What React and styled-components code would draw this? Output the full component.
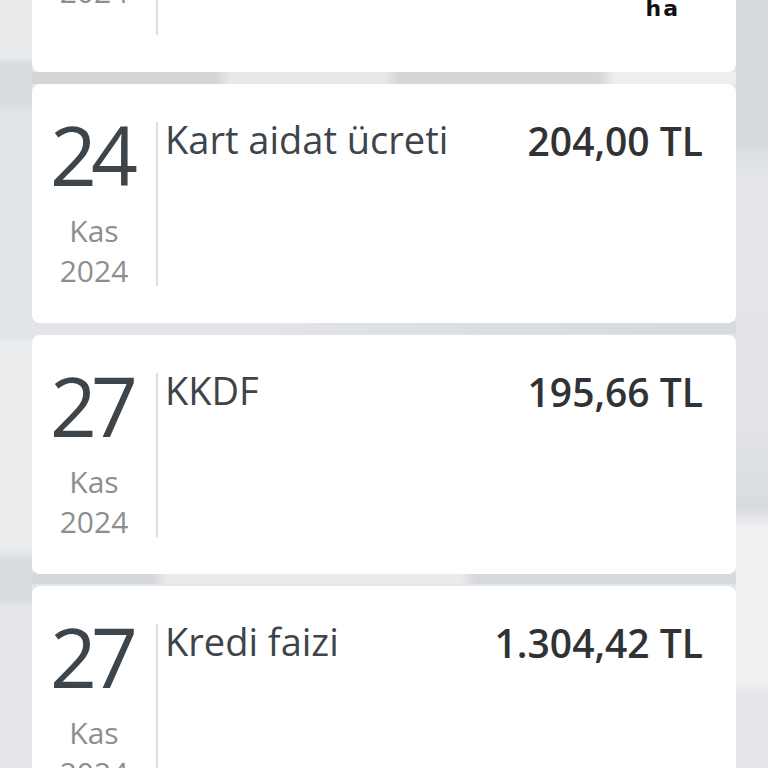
import React from "react";
import styled, { createGlobalStyle } from "styled-components";

const Global = createGlobalStyle`
  html, body { margin: 0; padding: 0; }
  body {
    width: 768px;
    height: 768px;
    overflow: hidden;
    font-family: "Open Sans", "Noto Sans", sans-serif;
  }
`;

const Screen = styled.div`
  width: 768px;
  height: 768px;
  overflow: hidden;
  box-sizing: border-box;
  padding: 0 32px;
  background:
    linear-gradient(180deg, #e9ebed 0 58px, #d8dbdf 64px 104px, #e1e4e7 112px 336px, #eaecee 344px 548px, #d8dbdf 562px 598px, #e3e5e8 606px) left 0 top 0 / 32px 100% no-repeat,
    linear-gradient(180deg, #d7dadd 0 140px, #e4e6e9 175px, #e2e4e7 420px, #d8dbdf 508px, #f0f1f3 528px 680px, #e5e7ea 692px) right 0 top 0 / 32px 100% no-repeat,
    linear-gradient(90deg, #d3d6d9 0 28%, #e6e8ea 30% 50%, #d4d7da 52% 78%, #eceef0 80%) left 0 top 72px / 100% 12px no-repeat,
    linear-gradient(90deg, #e3e5e8 0 30%, #dcdfe2 60%, #d6d9dc 100%) left 0 top 322px / 100% 12px no-repeat,
    linear-gradient(90deg, #d6d9dc 0 20%, #e9ebed 22% 60%, #d7dadd 62%) left 0 top 572px / 100% 12px no-repeat,
    #e2e4e7;
`;

const List = styled.div`
  display: flex;
  flex-direction: column;
  gap: 12px;
  margin-top: ${(p) => p.$offset}px;
`;

const Card = styled.div`
  position: relative;
  display: flex;
  background: #ffffff;
  border-radius: 8px;
  padding: 38px 33px 33px 0;
`;

const DateCol = styled.div`
  width: 124px;
  flex: none;
  display: flex;
  flex-direction: column;
  align-items: center;
  padding-bottom: ${(p) => p.$extra || 0}px;
`;

const Day = styled.div`
  font-size: 82px;
  line-height: 84px;
  font-weight: 400;
  letter-spacing: -6px;
  margin-top: -10px;
  margin-right: 6px;
  color: #3d444a;
`;

const Month = styled.div`
  font-size: 30px;
  line-height: ${(p) => (p.$first ? 40 : 39)}px;
  margin-top: ${(p) => (p.$first ? 15 : 0)}px;
  color: #8e8e8e;
`;

const Divider = styled.div`
  width: 2px;
  flex: none;
  align-self: stretch;
  margin-bottom: 4px;
  background: #dcdcdc;
`;

const Body = styled.div`
  flex: 1;
  display: flex;
  justify-content: space-between;
  align-items: flex-start;
  padding-left: 7px;
`;

const Title = styled.div`
  font-size: 38px;
  line-height: 38px;
  margin-top: -2px;
  color: #3d444a;
`;

const Amount = styled.div`
  font-size: 39px;
  line-height: 38px;
  font-weight: 600;
  color: #303336;
`;

const Scribble = styled.div`
  position: absolute;
  right: 56px;
  bottom: 54px;
  font-family: "DejaVu Sans", sans-serif;
  font-weight: 700;
  font-size: 22px;
  line-height: 19px;
  letter-spacing: 2px;
  color: #111;
`;

const items = [
  { day: "22", title: "", amount: "", extra: 28, scribble: true },
  { day: "24", title: "Kart aidat ücreti", amount: "204,00 TL" },
  { day: "27", title: "KKDF", amount: "195,66 TL" },
  { day: "27", title: "Kredi faizi", amount: "1.304,42 TL" },
];

export default function App() {
  return (
    <>
      <Global />
      <Screen>
        <List $offset={-195}>
          {items.map((it, i) => (
            <Card key={i}>
              <DateCol $extra={it.extra}>
                <Day>{it.day}</Day>
                <Month $first>Kas</Month>
                <Month>2024</Month>
              </DateCol>
              <Divider />
              <Body>
                <Title>{it.title}</Title>
                <Amount>{it.amount}</Amount>
              </Body>
              {it.scribble && <Scribble>ha</Scribble>}
            </Card>
          ))}
        </List>
      </Screen>
    </>
  );
}
